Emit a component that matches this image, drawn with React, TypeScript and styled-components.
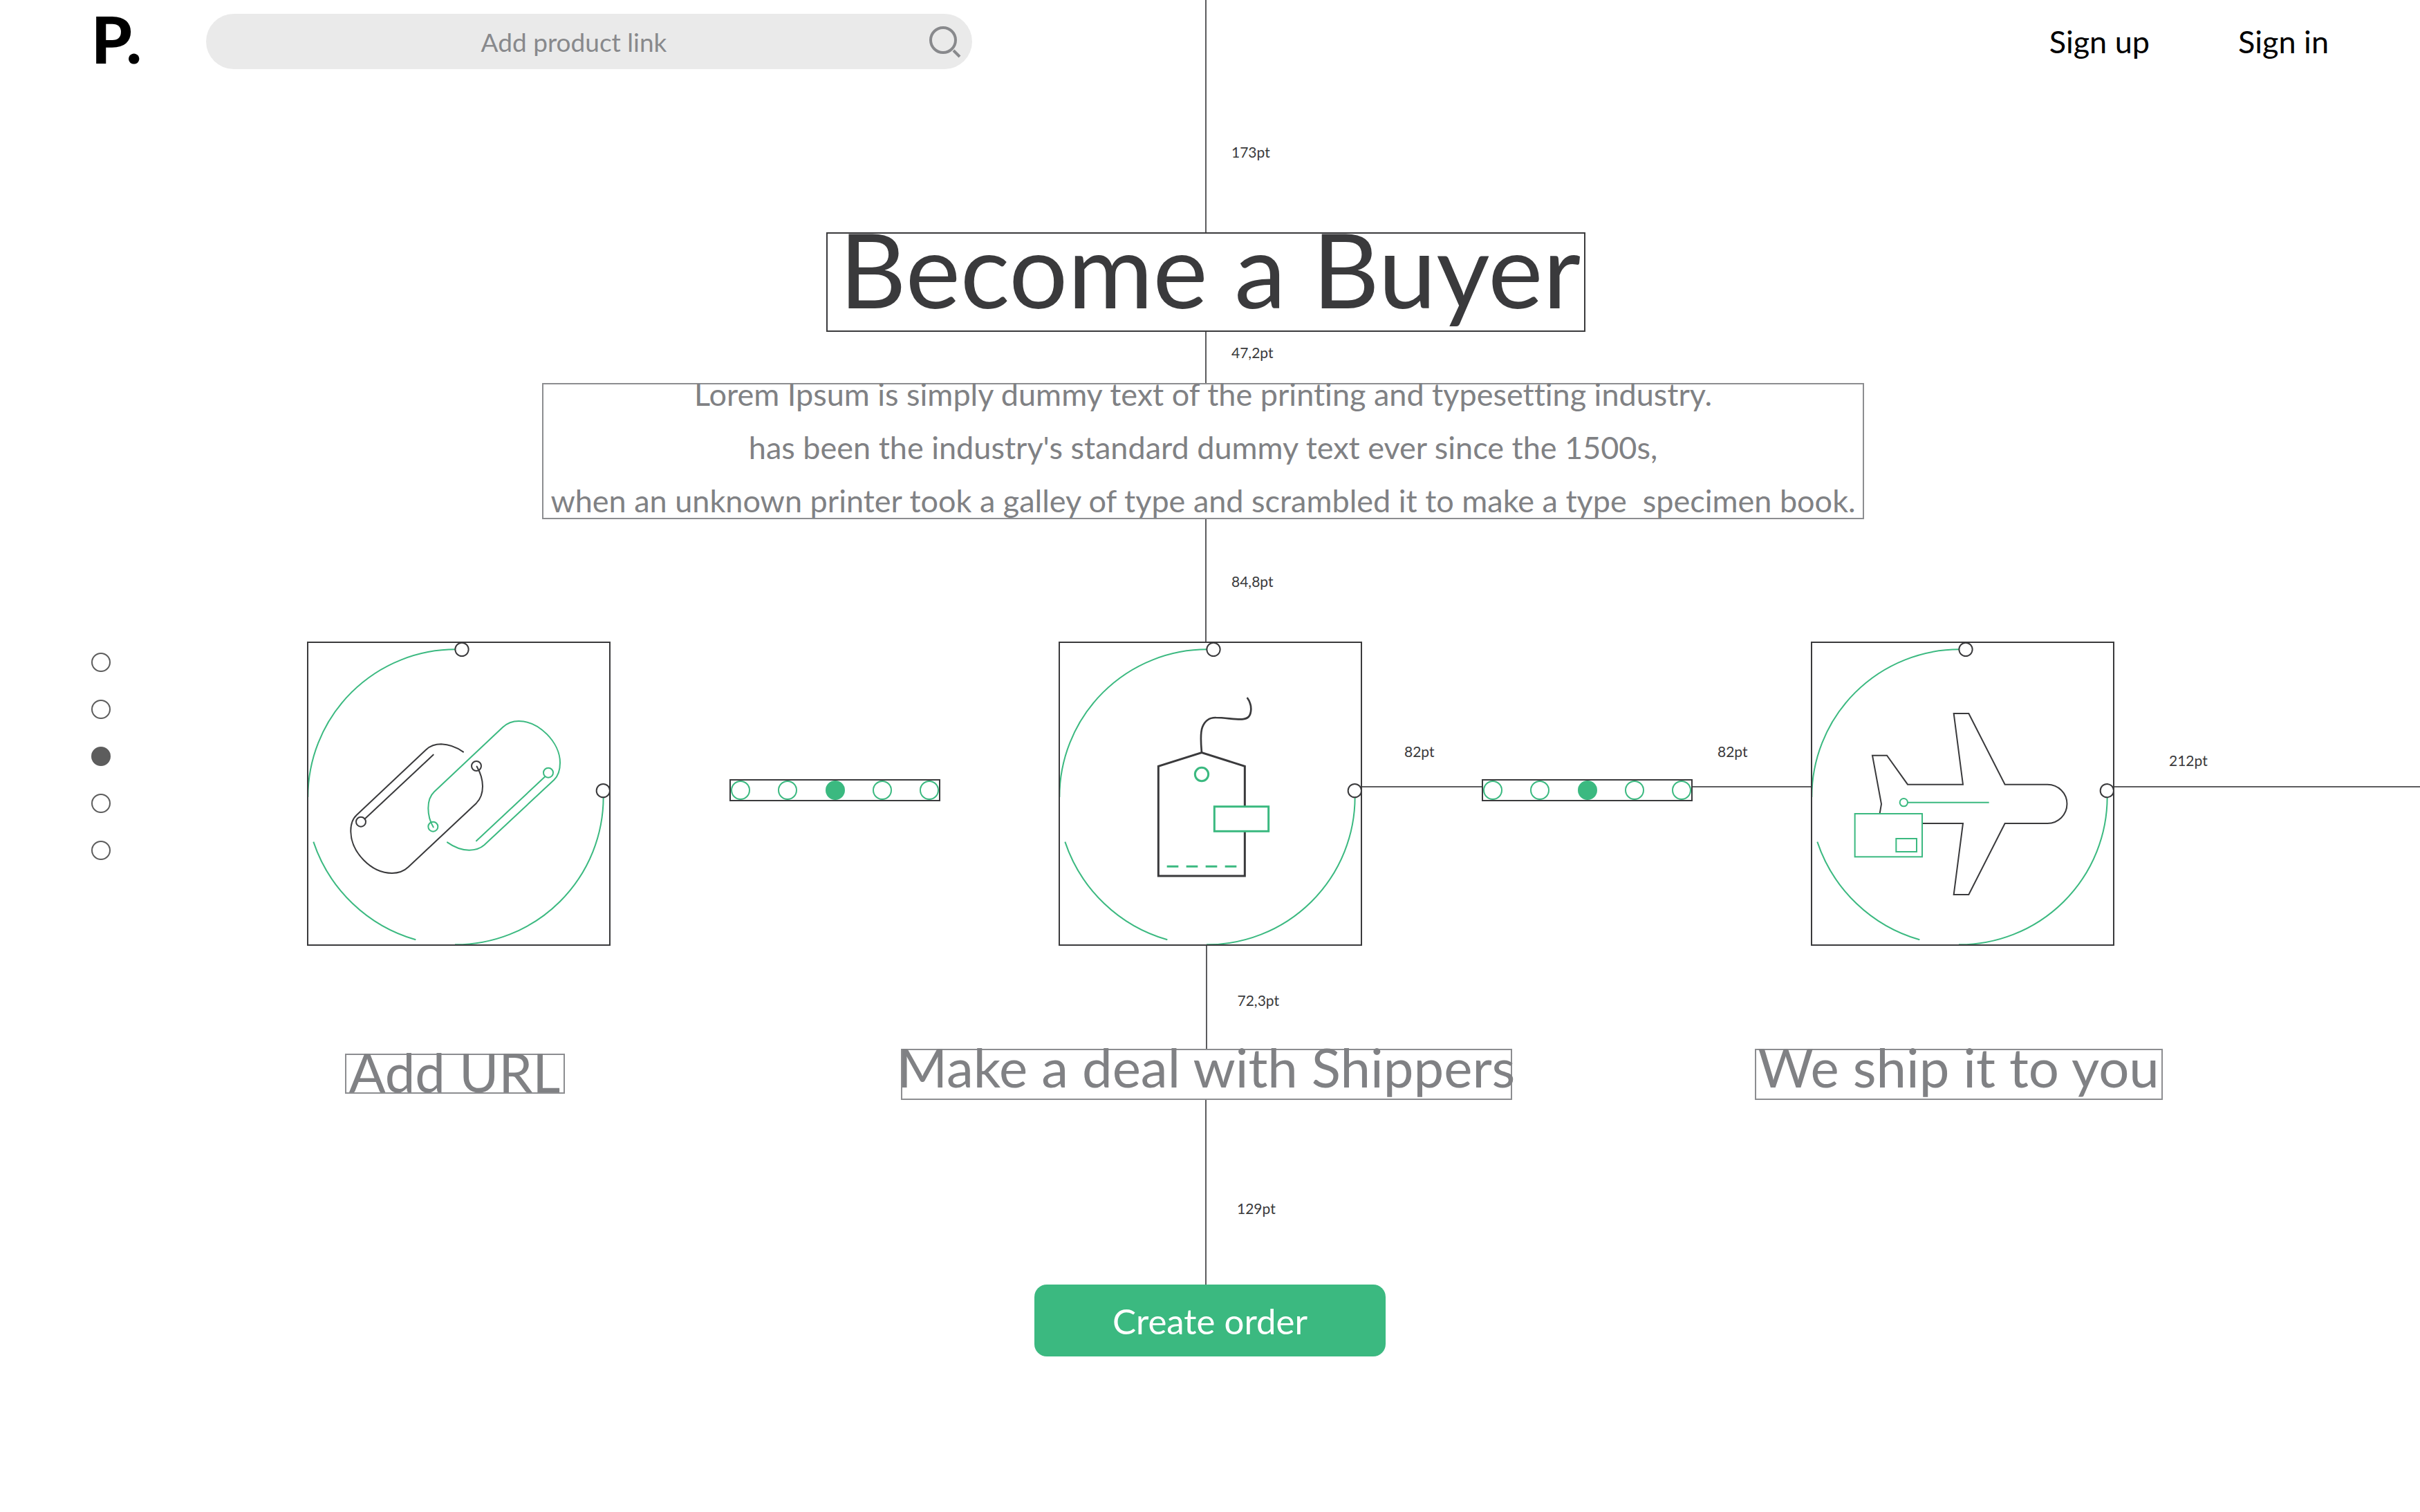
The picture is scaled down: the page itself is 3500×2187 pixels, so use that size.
import React from "react";
import styled, { createGlobalStyle } from "styled-components";

const ink = "#3a3a3c";
const grey = "#808184";
const green = "#3bb980";

const GlobalStyle = createGlobalStyle`
  *, *::before, *::after { box-sizing: border-box; }
  body { margin: 0; background: #fff; font-variant-ligatures: none; }
  h1, h2, p { margin: 0; font-weight: 400; }
  body, input, button { font-family: Lato, "Open Sans", sans-serif; }
`;

const Page = styled.div`
  min-height: 100vh;
  overflow-x: hidden;
  background: #fff;
  color: ${ink};
`;

const Top = styled.div`
  display: grid;
  grid-template-columns: 1fr;
`;

const Header = styled.header`
  grid-area: 1 / 1;
  display: flex;
  align-items: center;
  align-self: start;
  padding: 20px 132px;
`;

const Logo = styled.a`
  width: 166px;
  flex: none;
  padding-bottom: 8px;
  color: #000;
  font-size: 94px;
  line-height: 72px;
  font-weight: 900;
  text-decoration: none;
`;

const Search = styled.form`
  display: flex;
  align-items: center;
  flex: 0 1 1108px;
  height: 80px;
  padding-right: 16px;
  border-radius: 40px;
  background: #eaeaea;
`;

const SearchInput = styled.input`
  flex: 1;
  min-width: 0;
  height: 100%;
  padding: 0 0 0 20px;
  border: 0;
  outline: 0;
  background: transparent;
  color: #88898c;
  font-size: 37px;
  text-align: center;
  &::placeholder { color: #88898c; opacity: 1; }
`;

const SearchButton = styled.button`
  flex: none;
  width: 48px;
  height: 48px;
  padding: 0;
  border: 0;
  background: transparent;
  svg { display: block; }
`;

const Nav = styled.nav`
  display: flex;
  gap: 128px;
  margin-left: auto;
`;

const NavLink = styled.a`
  color: #000;
  font-size: 45px;
  line-height: 80px;
  text-decoration: none;
`;

const GuideBox = styled.div<{ $height: number; $labelTop: number; $gap: number }>`
  display: grid;
  grid-template-columns: 1fr 2px 1fr;
  column-gap: ${(p) => p.$gap}px;
  height: ${(p) => p.$height}px;
  margin-right: 12px;
  font-size: 21px;
  line-height: 24px;
  &::before { content: ""; }
  span { padding-top: ${(p) => p.$labelTop}px; white-space: nowrap; }
`;

const GuideLine = styled.i`
  background: #5c5c5e;
`;

const TopGuide = styled.div`
  grid-area: 1 / 1;
  pointer-events: none;
`;

const Centered = styled.div<{ $trim?: number }>`
  display: flex;
  justify-content: center;
  padding-right: ${(p) => p.$trim ?? 0}px;
`;

const Title = styled.h1`
  width: 1098px;
  padding: 0 0 40px 12px;
  border: 2px solid ${ink};
  font-size: 150px;
  line-height: 100px;
  text-align: center;
  white-space: nowrap;
`;

const Intro = styled.div`
  display: flex;
  justify-content: center;
  width: 1912px;
  border: 2px solid #8c8d90;
`;

const IntroText = styled.p`
  margin: -24px 0 -14px;
  color: ${grey};
  font-size: 45px;
  line-height: 77px;
  text-align: center;
  white-space: pre;
`;

const Steps = styled.section`
  display: grid;
  grid-template-columns: 444fr 439px 172fr 305px 171fr 439px 173fr 305px 171fr 439px 442fr;
  justify-items: stretch;
`;

const Pager = styled.nav`
  display: flex;
  flex-direction: column;
  gap: 40px;
  padding: 16px 0 0 132px;
`;

const PagerDot = styled.button<{ $active: boolean }>`
  width: 28px;
  height: 28px;
  padding: 0;
  border: 2px solid #5d5d5d;
  border-radius: 50%;
  background: ${(p) => (p.$active ? "#5d5d5d" : "#fff")};
`;

const Card = styled.div<{ $col: number }>`
  grid-column: ${(p) => p.$col};
  grid-row: 1;
  height: 440px;
  outline: 2px solid ${ink};
  outline-offset: -2px;
  svg { display: block; width: 100%; height: 100%; }
`;

const Dots = styled.div<{ $col: number }>`
  grid-column: ${(p) => p.$col};
  grid-row: 1;
  align-self: start;
  display: flex;
  justify-content: space-between;
  margin-top: 199px;
  border: 2px solid ${ink};
`;

const Dot = styled.i<{ $active: boolean }>`
  width: 28px;
  height: 28px;
  border: 2px solid ${green};
  border-radius: 50%;
  background: ${(p) => (p.$active ? green : "transparent")};
`;

const Connector = styled.div<{ $col: number; $left: number; $bottom: number }>`
  grid-column: ${(p) => p.$col};
  grid-row: 1;
  display: flex;
  align-items: flex-end;
  align-self: start;
  height: 211px;
  padding: 0 0 ${(p) => p.$bottom}px ${(p) => p.$left}px;
  border-bottom: 2px solid #5c5c5e;
  font-size: 21px;
  line-height: 24px;
`;

const StepGuide = styled.div`
  grid-column: 6;
  grid-row: 2;
`;

const StepName = styled.h2<{ $col: number; $width: number; $capsOnly?: boolean }>`
  grid-column: ${(p) => p.$col};
  grid-row: 3;
  justify-self: center;
  align-self: start;
  display: flex;
  justify-content: center;
  width: ${(p) => p.$width}px;
  margin: ${(p) => (p.$capsOnly ? 7 : 0)}px 12px 0 0;
  padding-bottom: ${(p) => (p.$capsOnly ? 6 : 22)}px;
  border: 2px solid #8c8d90;
  color: ${grey};
  font-size: 78px;
  line-height: 48px;
  white-space: nowrap;
`;

const CreateButton = styled.button`
  width: 508px;
  height: 104px;
  border: 0;
  border-radius: 18px;
  background: ${green};
  color: #fff;
  font-size: 51px;
`;

function Guide(props: { label: string; height: number; top: number; gap?: number }) {
  return (
    <GuideBox $height={props.height} $labelTop={props.top} $gap={props.gap ?? 36}>
      <GuideLine />
      <span>{props.label}</span>
    </GuideBox>
  );
}

function Art({ label, shift = 0, children }: { label: string; shift?: number; children: React.ReactNode }) {
  return (
    <svg viewBox="43 52 1317 1320" fill="none" stroke={ink} strokeWidth="6" role="img" aria-label={label}>
      <g stroke={green}>
        <path d="M47 727A641 641 0 0 1 688 86" />
        <path d="M71 921A660 660 0 0 0 515 1346" />
        <path d="M1329 727A641 641 0 0 1 685 1367" />
      </g>
      <g fill="#fff">
        <circle cx="715" cy="86" r="29" />
        <circle cx="1328" cy="699" r="29" />
      </g>
      <g transform={`translate(${-shift} 0)`}>{children}</g>
    </svg>
  );
}

const LinkArt = () => (
  <Art label="Chain link">
    <g strokeLinecap="round">
      <path d="M721 531C690 509 657 498 625 497C597 497 576 506 560 521L258 805C240 822 232 850 233 878C235 965 320 1057 412 1057C440 1057 465 1047 482 1031L778 753C796 735 805 710 805 680C805 650 795 620 780 594" />
      <path d="M591 543L293 822" />
      <circle cx="277" cy="834" r="21" />
      <circle cx="778" cy="592" r="21" />
    </g>
    <g stroke={green} strokeLinecap="round">
      <path d="M591 857C578 835 569 805 569 775C569 745 578 720 595 704L892 424C910 407 932 397 962 397C1050 397 1141 490 1141 578C1141 608 1133 635 1115 652L812 935C795 950 775 957 747 957C715 957 680 943 652 923" />
      <path d="M778 917L1076 638" />
      <circle cx="1090" cy="621" r="21" />
      <circle cx="590" cy="855" r="21" />
    </g>
  </Art>
);

const TagArt = () => (
  <Art label="Price tag" shift={19}>
    <g strokeWidth="9">
      <path d="M495 1069V593L683 534L870 593V1069Z" />
      <path strokeWidth="8" d="M683 534C680 500 675 450 686 423C697 395 715 381 745 382C785 382 830 391 858 389C885 387 896 375 897 345C897 325 892 311 880 295" />
    </g>
    <g stroke={green} strokeWidth="9">
      <circle cx="683" cy="628" r="29" />
      <rect x="738" y="768" width="235" height="107" fill="#fff" />
      <path d="M532 1028H834" strokeDasharray="50 34" />
    </g>
  </Art>
);

const PlaneArt = () => (
  <Art label="Aeroplane with parcel" shift={15}>
    <path d="M357 798L364 757L325 546H388L478 672H718L678 364H743L900 672H1085A84 84 0 0 1 1085 841H900L743 1150H678L718 841H542" />
    <g stroke={green}>
      <circle cx="461" cy="750" r="17" />
      <path d="M479 750H831" />
      <rect x="249" y="799" width="292" height="187" fill="#fff" />
      <rect x="428" y="907" width="89" height="57" />
    </g>
  </Art>
);

function StepDots({ col }: { col: number }) {
  return (
    <Dots $col={col}>
      {[0, 1, 2, 3, 4].map((i) => (
        <Dot key={i} $active={i === 2} />
      ))}
    </Dots>
  );
}

export default function App() {
  return (
    <Page>
      <GlobalStyle />
      <Top>
        <Header>
          <Logo href="#">P.</Logo>
          <Search onSubmit={(e) => e.preventDefault()}>
            <SearchInput type="text" placeholder="Add product link" aria-label="Add product link" />
            <SearchButton type="submit" aria-label="Search">
              <svg width="48" height="48" viewBox="0 0 48 48" fill="none" stroke="#88898c" strokeWidth="4">
                <circle cx="22" cy="22" r="18" />
                <path d="M37 37L46 46" />
              </svg>
            </SearchButton>
          </Search>
          <Nav>
            <NavLink href="#">Sign up</NavLink>
            <NavLink href="#">Sign in</NavLink>
          </Nav>
        </Header>
        <TopGuide>
          <Guide label="173pt" height={336} top={208} />
        </TopGuide>
      </Top>
      <main>
        <Centered $trim={12}>
          <Title>Become a Buyer</Title>
        </Centered>
        <Guide label="47,2pt" height={74} top={18} />
        <Centered $trim={20}>
          <Intro>
            <IntroText>
              {"Lorem Ipsum is simply dummy text of the printing and typesetting industry.\nhas been the industry's standard dummy text ever since the 1500s,\nwhen an unknown printer took a galley of type and scrambled it to make a type  specimen book."}
            </IntroText>
          </Intro>
        </Centered>
        <Guide label="84,8pt" height={177} top={78} />
        <Steps>
          <Pager aria-label="Sections">
            {[1, 2, 3, 4, 5].map((n) => (
              <PagerDot key={n} type="button" aria-label={`Section ${n}`} $active={n === 3} />
            ))}
          </Pager>
          <Card $col={2}><LinkArt /></Card>
          <StepDots col={4} />
          <Card $col={6}><TagArt /></Card>
          <Connector $col={7} $left={61} $bottom={38}>82pt</Connector>
          <StepDots col={8} />
          <Connector $col={9} $left={36} $bottom={38}>82pt</Connector>
          <Card $col={10}><PlaneArt /></Card>
          <Connector $col={11} $left={79} $bottom={25}>212pt</Connector>
          <StepGuide>
            <Guide label="72,3pt" height={149} top={67} gap={44} />
          </StepGuide>
          <StepName $col={2} $width={318} $capsOnly>Add URL</StepName>
          <StepName $col={6} $width={884}>Make a deal with Shippers</StepName>
          <StepName $col={10} $width={590}>We ship it to you</StepName>
        </Steps>
        <Guide label="129pt" height={267} top={145} gap={44} />
        <Centered>
          <CreateButton type="button">Create order</CreateButton>
        </Centered>
      </main>
    </Page>
  );
}
